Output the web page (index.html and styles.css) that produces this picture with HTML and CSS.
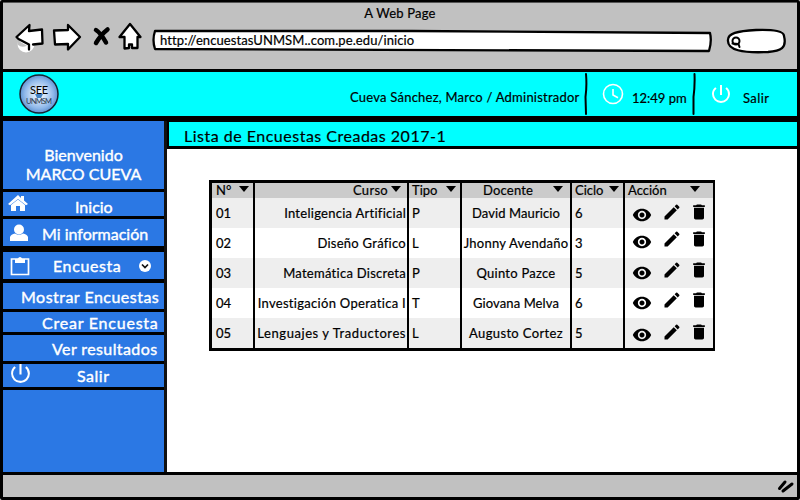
FILE: index.html
```
<!DOCTYPE html>
<html lang="es">
<head>
<meta charset="utf-8">
<title>A Web Page</title>
<link rel="stylesheet" href="styles.css">
</head>
<body>
<svg class="defs" aria-hidden="true">
  <symbol id="eye" viewBox="0 0 24 24"><path d="M12 4.500C7 4.500 2.730 7.610 1 12c1.730 4.390 6 7.500 11 7.500s9.270-3.110 11-7.500c-1.730-4.390-6-7.500-11-7.500zM12 17c-2.760 0-5-2.240-5-5s2.240-5 5-5 5 2.240 5 5-2.240 5-5 5zm0-8c-1.660 0-3 1.340-3 3s1.340 3 3 3 3-1.340 3-3-1.340-3-3-3z"/></symbol>
  <symbol id="pencil" viewBox="0 0 24 24"><path d="M3 17.250V21h3.750L17.810 9.940l-3.750-3.750L3 17.250zM20.710 7.040a1 1 0 0 0 0-1.410l-2.340-2.340a1 1 0 0 0-1.410 0l-1.830 1.830 3.750 3.750 1.830-1.830z"/></symbol>
  <symbol id="trash" viewBox="0 0 24 24"><path d="M6 19c0 1.100.9 2 2 2h8c1.100 0 2-.9 2-2V7H6v12zM19 4h-3.500l-1-1h-5l-1 1H5v2h14V4z"/></symbol>
  <symbol id="power" viewBox="0 0 24 24"><path d="M13 3h-2v10h2V3zm4.830 2.170l-1.420 1.420A6.920 6.920 0 0 1 19 12c0 3.870-3.130 7-7 7A6.995 6.995 0 0 1 7.580 6.580L6.170 5.170A8.932 8.932 0 0 0 3 12a9 9 0 0 0 18 0c0-2.740-1.230-5.180-3.170-6.830z"/></symbol>
</svg>
<div class="window">
  <div class="chrome">
    <div class="page-title"><span>A Web Page</span></div>
    <div class="toolbar">
      <svg class="nav" viewBox="0 0 130 36">
        <circle cx="13" cy="24" r="8.500" fill="#fff"/>
        <path d="M4 17L16 5l-.5 6L29 9.500l.5 14-14 1 .5 4.500z" fill="#fff"/>
        <path d="M4 18q3 5 10 7.500-5 3-9.500-1z" fill="#c1c1c1"/>
        <path d="M16 29.500v-5L5.500 19 3.500 17 16.500 5l-.5 6L29 9.500l.5 14-9.500 1" class="ink"/>
        <path d="M41 10.500l14-.5V5l12 12-12 12.500v-5.500l-13 .5z" class="ink white"/>
        <path d="M83 10C86 12 90 17 93 22.500M94.500 9.500C90 13 86 18 83 23" class="cross"/>
        <path d="M117 4l-10.500 13h5v11.500l4.500-.5V24.500h3V28h5.500V17h3z" class="ink white"/>
      </svg>
      <div class="address"><svg viewBox="0 0 561 24"><path d="M3 2Q0 11 3 20L557 22Q560 12 558 4L260 2z" class="ink white"/></svg><span>http://encuestasUNMSM..com.pe.edu/inicio</span></div>
      <svg class="search" viewBox="0 0 62 28"><path d="M2 14C1 6 12 4 30 3Q58 2 58 9C61 21 55 24 42 25Q2 27 2 14z" class="ink white"/><circle cx="10" cy="14" r="3.500" class="ink thin"/><path d="M6.500 16.500l6 .5 1 3" class="ink thin"/></svg>
    </div>
  </div>
  <header class="header">
    <svg class="logo" viewBox="0 0 42 42">
      <defs><radialGradient id="sky"><stop offset="0" stop-color="#fff"/><stop offset=".35" stop-color="#cfe2f8"/><stop offset=".75" stop-color="#8fb8ea"/><stop offset="1" stop-color="#5f93d2"/></radialGradient></defs>
      <circle cx="21" cy="21" r="19" fill="url(#sky)" stroke="#182030" stroke-width="1.500"/>
      <path d="M17 21h8l-2 4h-4z" fill="#4482c4"/>
      <text x="12" y="20.500" textLength="18" class="logo-a">SEE</text><text x="8" y="31" textLength="26" class="logo-b">UNMSM</text>
    </svg>
    <span class="user">Cueva Sánchez, Marco / Administrador</span>
    <svg class="divider" viewBox="0 0 4 44"><path d="M2 2Q3 14 1.500 25L2 42" class="ink thin"/></svg>
    <svg class="clock" viewBox="0 0 24 24"><circle cx="12" cy="12" r="9.500"/><path d="M12 7v6l5 2.700"/></svg>
    <span class="time">12:49 pm</span>
    <svg class="divider second" viewBox="0 0 4 44"><path d="M2.500 2Q3 14 1.500 25L1.500 42" class="ink thin"/></svg>
    <svg class="top-power"><use href="#power"/></svg>
    <span class="exit">Salir</span>
  </header>
  <div class="body">
    <nav class="sidebar">
      <div class="welcome"><span class="w1">Bienvenido</span><span class="w2">MARCO CUEVA</span></div>
      <div class="item inicio"><svg class="icon" viewBox="0 0 22 18"><path d="M11 1L1 10l2 1.200L11 5l8 6.200L21 10l-4-3.600V2h-3v2z"/><path d="M4 11l7-5.500L18 11v6h-5v-5H9v5H4z"/></svg><span>Inicio</span></div>
      <div class="item info"><svg class="icon" viewBox="0 0 22 18"><ellipse cx="11" cy="5.500" rx="5" ry="5"/><path d="M2 17v-4q1-3 5-3.500 4 2.500 8 0 4 .5 5 3.500v4z"/></svg><span>Mi información</span></div>
      <div class="item poll"><svg class="icon clip" viewBox="0 0 20 20"><path d="M1.500 3h17v15.500h-17z" fill="none" stroke="#fff" stroke-width="1.700"/><path d="M5 3h2.500q2.500-4 5 0H15v4H5z"/></svg><span>Encuesta</span><svg class="chevron" viewBox="0 0 14 14"><circle cx="7" cy="7" r="6" fill="#fff"/><path d="M4 5.500l3 3 3-3" fill="none" stroke="#111" stroke-width="1.700"/></svg></div>
      <div class="item show"><span>Mostrar Encuestas</span></div>
      <div class="item create"><span>Crear Encuesta</span></div>
      <div class="item results"><span>Ver resultados</span></div>
      <div class="item leave"><svg class="icon power" viewBox="1 1 22 22"><use href="#power" width="24" height="24"/></svg><span>Salir</span></div>
      <div class="rest"></div>
    </nav>
    <main class="main">
      <h1><span>Lista de Encuestas Creadas 2017-1</span></h1>
      <table>
        <colgroup><col class="c1"><col class="c2"><col class="c3"><col class="c4"><col class="c5"><col class="c6"></colgroup>
        <thead><tr>
          <th><div><span>N°</span><i></i></div></th><th class="right"><div><span>Curso</span><i></i></div></th><th><div><span>Tipo</span><i></i></div></th><th class="doc"><div><span>Docente</span><i></i></div></th><th><div><span>Ciclo</span><i></i></div></th><th class="act"><div><span>Acción</span><i></i></div></th>
        </tr></thead>
        <tbody>
          <tr><td>01</td><td>Inteligencia Artificial</td><td>P</td><td class="d1">David Mauricio</td><td>6</td><td><div class="actions"><svg><use href="#eye"/></svg><svg><use href="#pencil"/></svg><svg><use href="#trash"/></svg></div></td></tr>
          <tr><td>02</td><td>Diseño Gráfico</td><td>L</td><td class="d2">Jhonny Avendaño</td><td>3</td><td><div class="actions up">
            <svg><use href="#eye"/></svg><svg><use href="#pencil"/></svg><svg><use href="#trash"/></svg></div></td></tr>
          <tr><td>03</td><td>Matemática Discreta</td><td>P</td><td class="d3">Quinto Pazce</td><td>5</td><td><div class="actions mid"><svg><use href="#eye"/></svg><svg><use href="#pencil"/></svg><svg><use href="#trash"/></svg></div></td></tr>
          <tr><td>04</td><td class="r4">Investigación Operatica I</td><td>T</td><td class="d4">Giovana Melva</td><td>6</td><td><div class="actions mid"><svg><use href="#eye"/></svg><svg><use href="#pencil"/></svg><svg><use href="#trash"/></svg></div></td></tr>
          <tr><td>05</td><td class="r5">Lenguajes y Traductores</td><td>L</td><td class="d5">Augusto Cortez</td><td>5</td><td><div class="actions"><svg><use href="#eye"/></svg><svg><use href="#pencil"/></svg><svg><use href="#trash"/></svg></div></td></tr>
        </tbody>
      </table>
    </main>
  </div>
  <footer class="status"><svg viewBox="0 0 20 16"><path d="M2.500 10.500L8 4M6 13L15 6" class="grip"/></svg></footer>
</div>
</body>
</html>
```
FILE: styles.css
```
* { box-sizing: border-box; }
body { margin: 0; background: #fff; font: 13px/16px Lato, "Open Sans", sans-serif; color: #000; -webkit-text-stroke: .2px; }
svg { display: block; flex: none; }
span { white-space: nowrap; }
.defs { width: 0; height: 0; position: absolute; }
.ink { fill: none; stroke: #000; stroke-width: 2.300; stroke-linejoin: round; stroke-linecap: round; }
.white { fill: #fff; }
.thin { stroke-width: 2; }
.cross { fill: none; stroke: #000; stroke-width: 4.500; stroke-linecap: round; }

.window { width: 800px; height: 500px; border: solid #000; border-width: 2px 3px 3px 3px; border-radius: 2px; display: flex; flex-direction: column; }
.chrome { height: 70px; background: #c1c1c1; border-bottom: 3px solid #000; flex: none; border-top: 1px solid #555; }
.page-title { height: 17px; padding-top: 2px; text-align: center; }
.page-title span { letter-spacing: .2px; }
.toolbar { display: flex; padding-left: 10px; }
.nav { width: 130px; height: 36px; }
.address { width: 561px; height: 24px; margin: 9px 0 0 9px; display: grid; }
.address > * { grid-area: 1 / 1; }
.address span { padding: 3px 0 0 8px; letter-spacing: .09px; }
.search { width: 62px; height: 28px; margin: 7px 0 0 13px; }

.header { height: 44px; background: #0ff; display: flex; flex: none; }
.logo { width: 42px; height: 42px; margin: 1px 0 0 15px; }
.logo-a { font-size: 11px; }
.logo-b { font-size: 7.500px; fill: #26364d; }
.user { width: 229px; margin: 17px 0 0 290px; letter-spacing: .23px; }
.divider { width: 4px; height: 44px; margin-left: 5px; }
.clock { width: 24px; height: 24px; margin: 10px 0 0 13px; fill: none; stroke: #fff; stroke-width: 1.600; }
.time { width: 56px; margin: 18px 0 0 7px; }
.divider.second { margin-left: 4px; }
.top-power { width: 24px; height: 24px; margin: 10px 0 0 13px; fill: #fff; }
.exit { margin: 18px 0 0 10px; letter-spacing: .4px; }

.body { height: 356px; display: flex; flex: none; border-top: 5px solid #000; }
.sidebar { width: 164px; border-right: 3px solid #111; background: #000; color: #fff; display: flex; flex-direction: column; font-size: 16px; line-height: 19px; -webkit-text-stroke: .4px; }
.welcome { height: 68px; padding-top: 24px; background: #2b78e4; text-align: center; display: flex; flex-direction: column; align-items: center; }
.item { background: #2b78e4; display: flex; margin-top: 3px; flex: none; }
.icon { width: 22px; height: 18px; fill: #fff; }
.rest { flex: 1; margin-top: 3px; background: #2b78e4; }
.inicio { height: 24px; padding: 2px 0 0 4px; }
.inicio span { margin: 3px 0 0 46px; }
.info { height: 27px; padding: 5px 0 0 5px; }
.info span { margin: 0 0 0 12px; }
.poll { height: 27px; margin-top: 6px; padding: 4px 0 0 7px; }
.icon.clip { width: 20px; height: 20px; }
.poll span { width: 71px; margin: 0 0 0 23px; letter-spacing: .6px; }
.chevron { width: 14px; height: 14px; margin: 3px 0 0 14px; }
.show { height: 26px; margin-top: 4px; padding: 4px 0 0 18px; letter-spacing: .48px; }
.create { height: 20px; padding: 1px 0 0 39px; letter-spacing: .78px; }
.results { height: 26px; padding: 4px 0 0 49px; letter-spacing: .4px; }
.leave { height: 23px; }
.icon.power { width: 23px; height: 23px; margin: -2px 0 0 6px; }
.leave span { margin: 2px 0 0 45px; letter-spacing: .5px; }

.main { width: 630px; }
h1 { margin: 0; height: 28px; background: #0ff; border-bottom: 3px solid #000; border-left: 2px solid #000; border-top: 1px solid #000; font-size: 16px; line-height: 18px; font-weight: 400; padding: 5px 0 0 15px; letter-spacing: .5px; }
table { margin: 31px 0 0 42px; width: 506px; table-layout: fixed; border-collapse: separate; border-spacing: 0; border: 3px solid #000; border-right-width: 2px; }
.c1 { width: 43px; } .c2 { width: 154px; } .c3 { width: 53px; } .c4 { width: 110px; } .c5 { width: 53px; }
th, td { padding: 0 0 0 3px; font-weight: 400; text-align: left; border-right: 2px solid #000; white-space: nowrap; }
th:first-child, td:first-child { padding-left: 4px; }
th:last-child, td:last-child { border-right: 0; }
th { height: 15px; background: #cbcbcb; line-height: 15px; }
th div { display: flex; justify-content: space-between; padding-right: 4px; }
th i { border: 5px solid transparent; border-top: 6px solid #000; border-bottom: 0; margin-top: 3px; }
th.right div { justify-content: flex-end; gap: 3px; padding-right: 6px; letter-spacing: .3px; }
th.doc div { padding: 0 7px 0 18px; letter-spacing: .2px; }
th.act div { padding-right: 13px; }
td { height: 30px; }
tr:nth-child(odd) td { background: #eee; }
td:nth-child(2) { text-align: right; padding: 0 1px 0 0; letter-spacing: .27px; }
td.r4 { letter-spacing: .3px; }
td.r5 { letter-spacing: .56px; }
td:nth-child(4) { text-align: center; padding: 0; letter-spacing: .1px; }
td.d2 { letter-spacing: .25px; }
td.d3 { letter-spacing: .25px; }
td.d5 { letter-spacing: .35px; }
.actions { display: flex; height: 30px; padding: 5px 0 0 4px; }
.actions svg { width: 20px; height: 20px; margin-top: 2px; fill: #000; }
.actions svg + svg { margin: -1px 0 0 10px; }
.actions svg + svg + svg { margin-left: 7px; }
.actions.up { padding-top: 2px; }
.actions.mid { padding-top: 3px; }

.status { flex: 1; background: #c1c1c1; border-top: 3px solid #000; display: flex; justify-content: flex-end; align-items: center; }
.status svg { width: 20px; height: 16px; }
.grip { stroke: #000; stroke-width: 3; stroke-linecap: round; }
```
